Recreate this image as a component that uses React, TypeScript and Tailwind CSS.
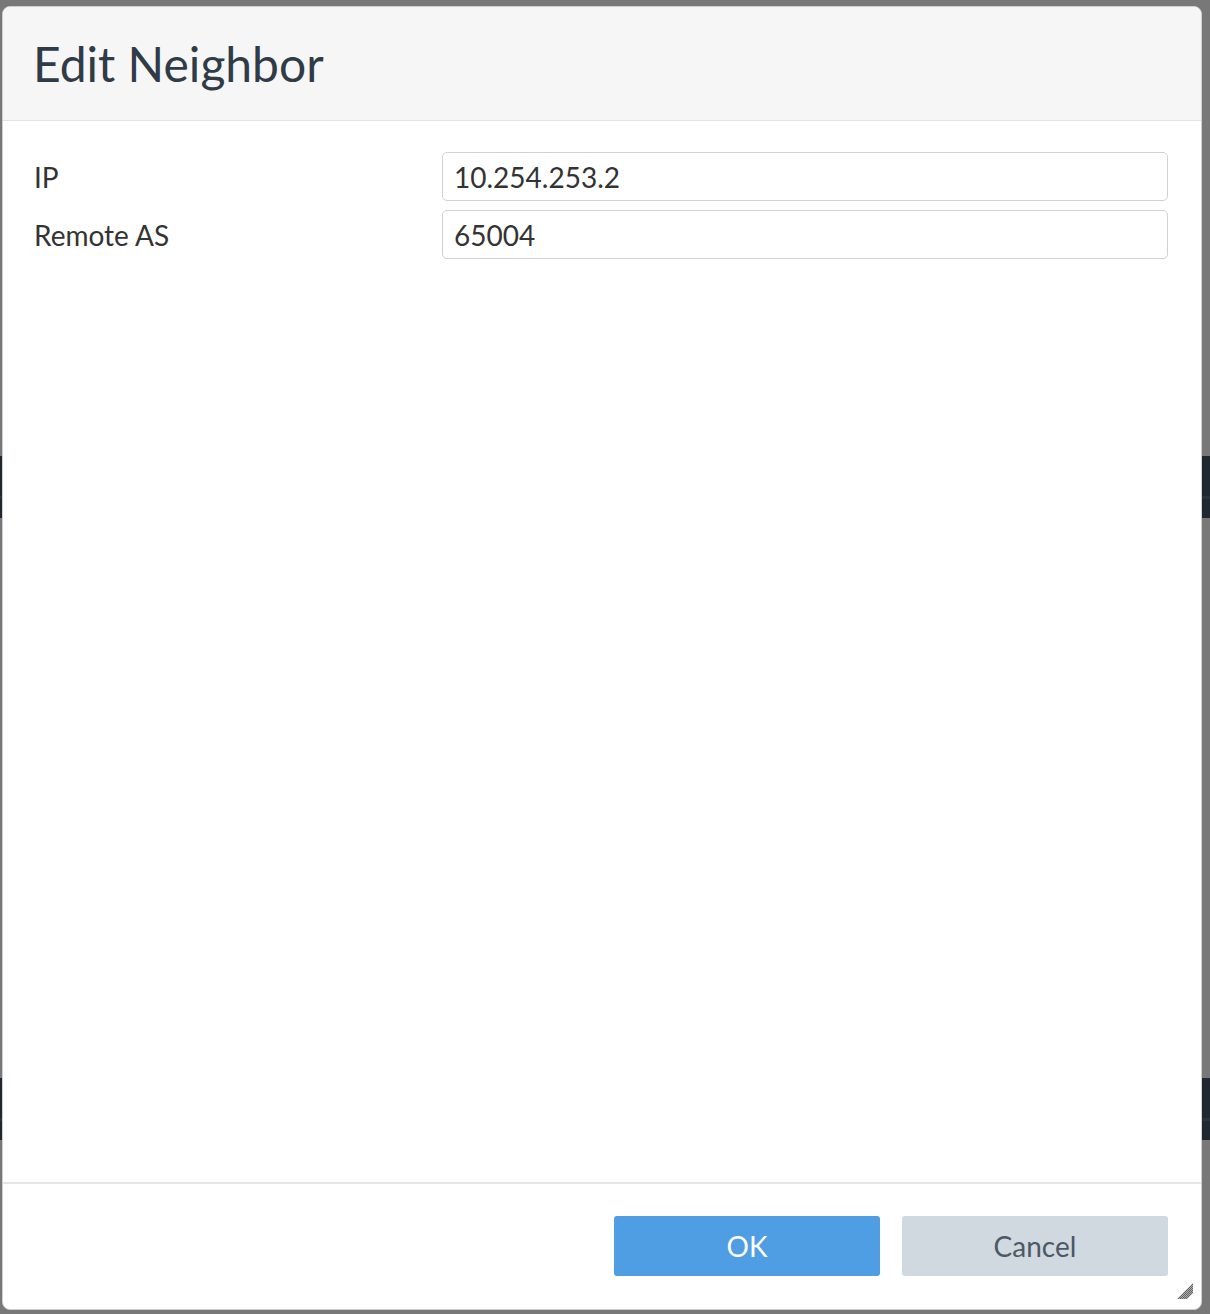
import React from 'react';

// --- Form data ---
const fields = [
    { label: 'IP', value: '10.254.253.2' },
    { label: 'Remote AS', value: '65004' },
];

// Dotted corner grip in the dialog's bottom-right corner
function ResizeGrip() {
    return (
        <svg width="16" height="16" viewBox="0 0 16 16" className="absolute right-[8px] bottom-[10px]">
            <defs>
                <pattern id="grip-dots" width="2" height="2" patternUnits="userSpaceOnUse">
                    <rect width="1" height="1" fill="#666" />
                    <rect x="1" y="1" width="1" height="1" fill="#666" />
                    <rect x="1" width="1" height="1" fill="#aaa" />
                    <rect y="1" width="1" height="1" fill="#aaa" />
                </pattern>
            </defs>
            <polygon points="16,0 16,10 10,16 0,16" fill="url(#grip-dots)" />
        </svg>
    );
}

function EditNeighborDialog() {
    return (
        <div className="absolute left-[2px] top-[6px] w-[1200px] h-[1304px] flex flex-col bg-white border border-[#cfcfcf] rounded-[8px] overflow-hidden">
            {/* Header */}
            <div className="h-[114px] shrink-0 flex items-center pl-[30px] bg-[#f6f6f6] border-b border-[#e3e3e3]">
                <h2 className="text-[48px] leading-[1.2] text-[#2f3b47]">Edit Neighbor</h2>
            </div>

            {/* Body */}
            <div className="flex-1 pt-[31px] pl-[31px] pr-[33px]">
                <div className="grid grid-cols-[408px_1fr] gap-y-[9px]">
                    {fields.map(f => (
                        <React.Fragment key={f.label}>
                            <label className="flex items-center text-[28px] text-[#333]">{f.label}</label>
                            <input
                                defaultValue={f.value}
                                className="h-[49px] w-full px-[11px] text-[28px] text-[#333] border-[1.5px] border-[#d0d0d0] rounded-[5px] outline-none"
                            />
                        </React.Fragment>
                    ))}
                </div>
            </div>

            {/* Footer */}
            <div className="relative h-[127px] shrink-0 flex justify-end items-start gap-[22px] pt-[32px] pr-[33px] border-t-2 border-[#e6e6e6]">
                <button className="w-[266px] h-[60px] rounded-[3px] bg-[#4f9de3] text-white text-[28px]">OK</button>
                <button className="w-[266px] h-[60px] rounded-[3px] bg-[#d1d9e0] text-[#4b5866] text-[28px]">Cancel</button>
                <ResizeGrip />
            </div>
        </div>
    );
}

export default function App() {
    return (
        <div className="relative h-[1314px] w-full overflow-hidden bg-[#787878] font-['Lato','Liberation_Sans',sans-serif]">
            {/* Page behind the modal overlay */}
            <div className="flex flex-col">
                <div className="h-[456px]" />
                <div className="h-[40px] bg-[#1f2730]" />
                <div className="h-[3px] bg-[#2a323b]" />
                <div className="h-[19px] bg-[#1f2730]" />
                <div className="h-[560px]" />
                <div className="h-[40px] bg-[#1f2730]" />
                <div className="h-[3px] bg-[#2a323b]" />
                <div className="h-[19px] bg-[#1f2730]" />
            </div>

            <EditNeighborDialog />
        </div>
    );
}
